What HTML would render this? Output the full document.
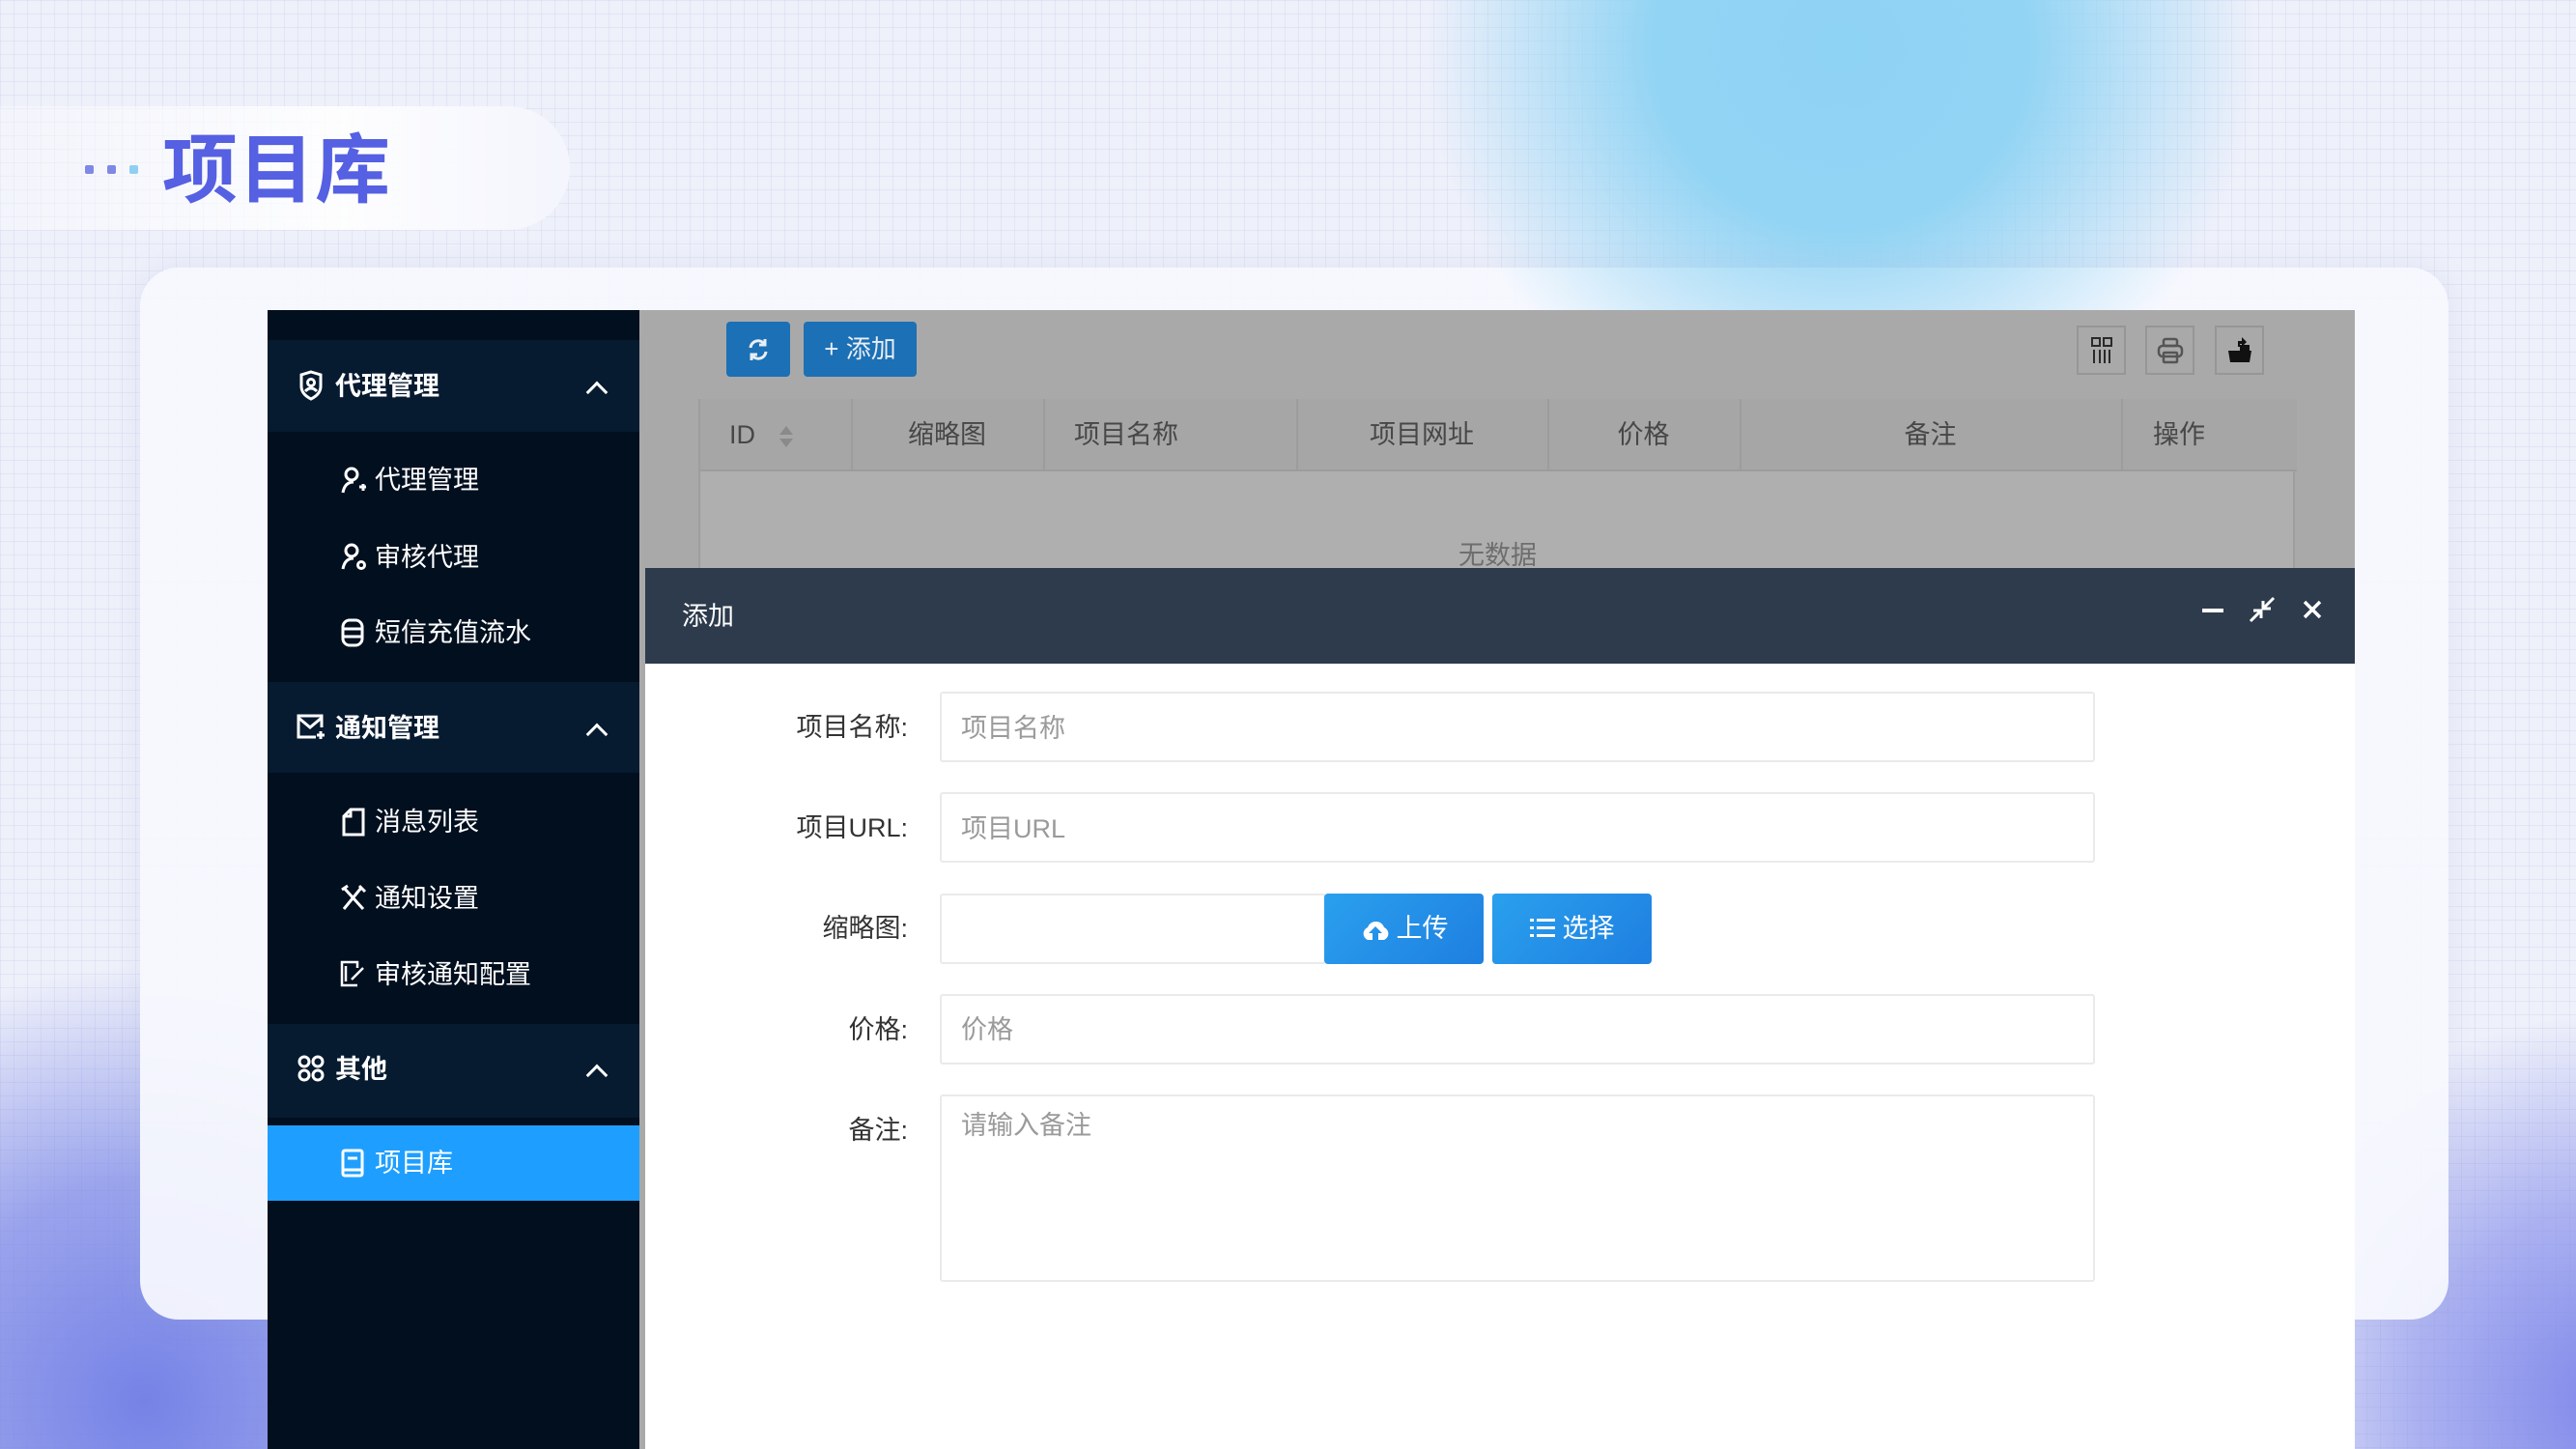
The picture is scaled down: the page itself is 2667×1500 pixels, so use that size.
<!DOCTYPE html>
<html style="overflow:hidden;width:2667px;height:1500px"><head><meta charset="utf-8"><style>
*{margin:0;padding:0;box-sizing:border-box}
body{width:2667px;height:1500px;overflow:hidden;position:relative;font-family:"Liberation Sans","Noto Sans CJK SC",sans-serif}
#w{position:absolute;left:0;top:0;width:2667px;height:1500px;overflow:hidden;
background:#eef0fa;
background-image:linear-gradient(rgba(190,196,230,.25) 1px,transparent 1px),linear-gradient(90deg,rgba(190,196,230,.25) 1px,transparent 1px);background-size:14px 14px}
.a{position:absolute}
.blob{left:1450px;top:0;width:950px;height:330px;background:radial-gradient(ellipse 430px 420px at 48% 15%,#8ed2f4 0%,#92d4f4 45%,rgba(146,212,244,0) 100%)}
.corn{left:0;top:0;width:2667px;height:1500px;background:radial-gradient(circle 450px at 150px 1450px,#7683e6 0%,rgba(118,131,230,.7) 50%,rgba(118,131,230,0) 100%),radial-gradient(circle 400px at 2700px 1450px,#7f88ea 0%,rgba(127,136,234,.6) 50%,rgba(127,136,234,0) 100%)}
.card{left:145px;top:277px;width:2390px;height:1089px;border-radius:40px;background:rgba(248,249,254,.93);box-shadow:0 0 30px rgba(150,160,210,.15)}
.pill{left:0;top:110px;width:590px;height:128px;border-radius:0 64px 64px 0;background:linear-gradient(90deg,rgba(255,255,255,.3),rgba(255,255,255,.9) 60%,#f4f5fd)}
.title{left:168px;top:126px;font-size:78px;font-weight:bold;color:#5560e2;letter-spacing:1px;line-height:100px}
.dot{width:9px;height:9px;border-radius:2px;top:171px}
.side{left:277px;top:321px;width:385px;height:1179px;background:#020f1f}
.band{left:0;width:385px;background:#061a30}
.st{color:#fff;font-size:27px;line-height:40px;white-space:nowrap}
.hd{font-weight:bold}
.chev{left:333px;width:16px;height:16px;border-left:3px solid #fff;border-top:3px solid #fff;transform:rotate(45deg)}
.main{left:662px;top:321px;width:1776px;height:1179px;background:#a9a9a9}
.tbl{left:61px;top:92px;width:1653px;height:200px;background:#afafaf;border-left:2px solid #9e9e9e;border-right:2px solid #9e9e9e}
.th{left:0;top:0;width:1653px;height:75px;background:#a6a6a6;border-bottom:2px solid #9c9c9c}
.vl{top:0;width:2px;height:75px;background:#9c9c9c}
.tt{top:17px;font-size:27px;color:#474747;line-height:40px;white-space:nowrap}
.btn{background:#1c70b5;border-radius:4px;color:#e8eef5;font-size:26px;line-height:57px;text-align:center}
.ib{width:51px;height:51px;border:2px solid #969696;background:#a9a9a9}
.modal{left:668px;top:588px;width:1770px;height:912px;background:#fff}
.mh{left:0;top:0;width:1770px;height:99px;background:#2d3b4c}
.lb{font-size:27px;color:#333;line-height:40px;text-align:right;width:300px;white-space:nowrap}
.in{border:2px solid #eaeaea;border-radius:3px;background:#fff}
.ph{font-size:27px;color:#9a9a9a;line-height:40px;white-space:nowrap}
.bb{border-radius:4px;background:linear-gradient(135deg,#2aa0ee,#1e7fe0);color:#fff;font-size:27px;line-height:73px;text-align:center}
</style></head><body><div id="w">
<div class="a blob"></div>
<div class="a corn"></div>
<div class="a card"></div>
<div class="a blob" style="opacity:.9;clip-path:inset(277px 0 0 0)"></div>
<div class="a pill"></div>
<div class="a dot" style="left:88px;background:#8088e6"></div>
<div class="a dot" style="left:111px;background:#8088e6"></div>
<div class="a dot" style="left:134px;background:#8fd0f2"></div>
<div class="a title">项目库</div>

<div class="a side">
  <div class="a band" style="top:31px;height:95px"></div>
  <div class="a band" style="top:385px;height:94px"></div>
  <div class="a band" style="top:739px;height:97px"></div>
  <div class="a" style="left:0;top:844px;width:385px;height:78px;background:#1e9fff"></div>
  <svg class="a" style="left:32px;top:62px" width="26" height="32" viewBox="0 0 26 32" fill="none" stroke="#fff" stroke-width="3"><path d="M13 2 L23 5 V17 Q23 25 13 30 Q3 25 3 17 V5 Z"/><circle cx="13" cy="13" r="3.5"/><path d="M7 22 Q13 16 19 22"/></svg>
  <div class="a st hd" style="left:70px;top:59px">代理管理</div>
  <div class="a chev" style="top:77px"></div>
  <svg class="a" style="left:75px;top:161px" width="28" height="30" viewBox="0 0 28 30" fill="none" stroke="#fff" stroke-width="3"><circle cx="12" cy="9" r="6"/><path d="M3 28 Q5 17 14 17"/><path d="M20 22 h7 M24 19 v7"/></svg>
  <div class="a st" style="left:111px;top:156px">代理管理</div>
  <svg class="a" style="left:75px;top:240px" width="28" height="30" viewBox="0 0 28 30" fill="none" stroke="#fff" stroke-width="3"><circle cx="12" cy="9" r="6"/><path d="M3 28 Q5 17 14 17"/><circle cx="22" cy="24" r="3.5"/></svg>
  <div class="a st" style="left:111px;top:236px">审核代理</div>
  <svg class="a" style="left:76px;top:319px" width="24" height="30" viewBox="0 0 24 30" fill="none" stroke="#fff" stroke-width="3"><rect x="2" y="2" width="20" height="26" rx="7"/><path d="M2 11 H22 M2 19 H22"/></svg>
  <div class="a st" style="left:111px;top:314px">短信充值流水</div>
  <svg class="a" style="left:30px;top:418px" width="30" height="28" viewBox="0 0 30 28" fill="none" stroke="#fff" stroke-width="3"><path d="M20 24 H2 V2 H26 V14"/><path d="M2 4 L14 14 L26 4"/><path d="M21 22 h8 M25 18 v8"/></svg>
  <div class="a st hd" style="left:70px;top:413px">通知管理</div>
  <div class="a chev" style="top:431px"></div>
  <svg class="a" style="left:77px;top:515px" width="24" height="30" viewBox="0 0 24 30" fill="none" stroke="#fff" stroke-width="3"><path d="M9 2 H22 V28 H2 V9 Z M9 2 V9 H2"/></svg>
  <div class="a st" style="left:111px;top:510px">消息列表</div>
  <svg class="a" style="left:75px;top:594px" width="28" height="28" viewBox="0 0 28 28" fill="none" stroke="#fff" stroke-width="3"><path d="M4 26 L22 4 M4 4 L24 26 M2 6 L8 2 M20 2 L26 8"/></svg>
  <div class="a st" style="left:111px;top:589px">通知设置</div>
  <svg class="a" style="left:75px;top:673px" width="28" height="28" viewBox="0 0 28 28" fill="none" stroke="#fff" stroke-width="2.5"><path d="M18 26 H2 V2 H18 V8 M6 6 V22 M12 20 L24 8"/></svg>
  <div class="a st" style="left:111px;top:668px">审核通知配置</div>
  <svg class="a" style="left:31px;top:771px" width="28" height="28" viewBox="0 0 28 28" fill="none" stroke="#fff" stroke-width="3"><circle cx="7" cy="7" r="5"/><circle cx="21" cy="7" r="5"/><circle cx="7" cy="21" r="5"/><circle cx="21" cy="21" r="5"/></svg>
  <div class="a st hd" style="left:70px;top:766px">其他</div>
  <div class="a chev" style="top:784px"></div>
  <svg class="a" style="left:76px;top:868px" width="24" height="30" viewBox="0 0 24 30" fill="none" stroke="#fff" stroke-width="3"><rect x="2" y="2" width="20" height="26" rx="2"/><path d="M7 10 H17 M2 22 H22"/></svg>
  <div class="a st" style="left:111px;top:863px">项目库</div>
</div>

<div class="a main">
  <div class="a btn" style="left:90px;top:12px;width:66px;height:57px">
    <svg style="margin-top:15px" width="24" height="28" viewBox="0 0 24 28" fill="none" stroke="#e8eef5" stroke-width="3"><path d="M4 12 A8 8 0 0 1 19 9 M20 16 A8 8 0 0 1 5 19 M19 3 V9 H13 M5 25 V19 H11"/></svg>
  </div>
  <div class="a btn" style="left:170px;top:12px;width:117px;height:57px">+ 添加</div>
  <div class="a ib" style="left:1488px;top:16px"><svg class="a" style="left:13px;top:10px" width="22" height="28" viewBox="0 0 22 28" fill="none" stroke="#2a2a2a" stroke-width="2"><rect x="1" y="1" width="8" height="8"/><rect x="13" y="1" width="8" height="8"/><path d="M3 13 V27 M9 13 V27 M14 13 V27 M19 13 V27"/></svg></div>
  <div class="a ib" style="left:1559px;top:16px"><svg class="a" style="left:10px;top:10px" width="28" height="28" viewBox="0 0 28 28" fill="none" stroke="#555" stroke-width="2.5"><rect x="7" y="2" width="14" height="7" rx="2"/><rect x="2" y="9" width="24" height="11" rx="4"/><rect x="7" y="16" width="14" height="10" rx="1"/></svg></div>
  <div class="a ib" style="left:1631px;top:16px"><svg class="a" style="left:10px;top:8px" width="28" height="30" viewBox="0 0 28 30" fill="#111"><path d="M2 16 H26 L24 28 H4 Z"/><rect x="14" y="10" width="10" height="6"/><path d="M12 12 V6 H16 L16 2 L21 7 L16 12 V9 H14 V12 Z"/></svg></div>
  <div class="a tbl">
    <div class="a th">
      <div class="a vl" style="left:156px"></div><div class="a vl" style="left:355px"></div><div class="a vl" style="left:617px"></div><div class="a vl" style="left:877px"></div><div class="a vl" style="left:1076px"></div><div class="a vl" style="left:1471px"></div>
      <div class="a tt" style="left:30px">ID</div>
      <svg class="a" style="left:80px;top:27px" width="18" height="24" viewBox="0 0 18 24" fill="#8a8a8a"><path d="M9 1 L16 10 H2 Z M9 23 L16 14 H2 Z"/></svg>
      <div class="a tt" style="left:156px;width:199px;text-align:center">缩略图</div>
      <div class="a tt" style="left:387px">项目名称</div>
      <div class="a tt" style="left:617px;width:260px;text-align:center">项目网址</div>
      <div class="a tt" style="left:877px;width:199px;text-align:center">价格</div>
      <div class="a tt" style="left:1076px;width:395px;text-align:center">备注</div>
      <div class="a tt" style="left:1471px;width:120px;text-align:center">操作</div>
    </div>
    <div class="a tt" style="left:785px;top:142px;color:#6e6e6e">无数据</div>
  </div>
</div>

<div class="a modal">
  <div class="a mh">
    <div class="a" style="left:38px;top:30px;color:#fff;font-size:27px;line-height:40px">添加</div>
    <div class="a" style="left:1612px;top:42px;width:22px;height:4px;background:#fff"></div>
    <svg class="a" style="left:1659px;top:28px" width="30" height="30" viewBox="0 0 30 30" fill="none" stroke="#fff" stroke-width="3"><path d="M3 27 L13 17 M6 16 H14 V24 M27 3 L17 13 M24 14 H16 V6"/></svg>
    <svg class="a" style="left:1716px;top:33px" width="20" height="20" viewBox="0 0 20 20" stroke="#fff" stroke-width="3.5"><path d="M2 2 L18 18 M18 2 L2 18"/></svg>
  </div>
  <div class="a lb" style="left:-28px;top:145px">项目名称:</div>
  <div class="a in" style="left:305px;top:128px;width:1196px;height:73px"></div>
  <div class="a ph" style="left:327px;top:146px">项目名称</div>
  <div class="a lb" style="left:-28px;top:249px">项目URL:</div>
  <div class="a in" style="left:305px;top:232px;width:1196px;height:73px"></div>
  <div class="a ph" style="left:327px;top:250px">项目URL</div>
  <div class="a lb" style="left:-28px;top:353px">缩略图:</div>
  <div class="a in" style="left:305px;top:337px;width:400px;height:73px"></div>
  <div class="a bb" style="left:703px;top:337px;width:165px;height:73px"><svg style="vertical-align:-4px;margin-right:6px" width="32" height="22" viewBox="0 0 32 22" fill="#fff"><path d="M8 21 A7 7 0 0 1 8 8 A9 9 0 0 1 25 8 A7 7 0 0 1 25 21 H19 V14 H23 L16 7 L9 14 H13 V21 Z"/></svg>上传</div>
  <div class="a bb" style="left:877px;top:337px;width:165px;height:73px"><svg style="vertical-align:-2px;margin-right:8px" width="26" height="22" viewBox="0 0 26 22" fill="#fff"><rect x="0" y="1" width="4" height="3"/><rect x="7" y="1" width="19" height="3"/><rect x="0" y="9" width="4" height="3"/><rect x="7" y="9" width="19" height="3"/><rect x="0" y="17" width="4" height="3"/><rect x="7" y="17" width="19" height="3"/></svg>选择</div>
  <div class="a lb" style="left:-28px;top:458px">价格:</div>
  <div class="a in" style="left:305px;top:441px;width:1196px;height:73px"></div>
  <div class="a ph" style="left:327px;top:458px">价格</div>
  <div class="a lb" style="left:-28px;top:562px">备注:</div>
  <div class="a in" style="left:305px;top:545px;width:1196px;height:194px"></div>
  <div class="a ph" style="left:327px;top:557px">请输入备注</div>
</div>
</div></body></html>
